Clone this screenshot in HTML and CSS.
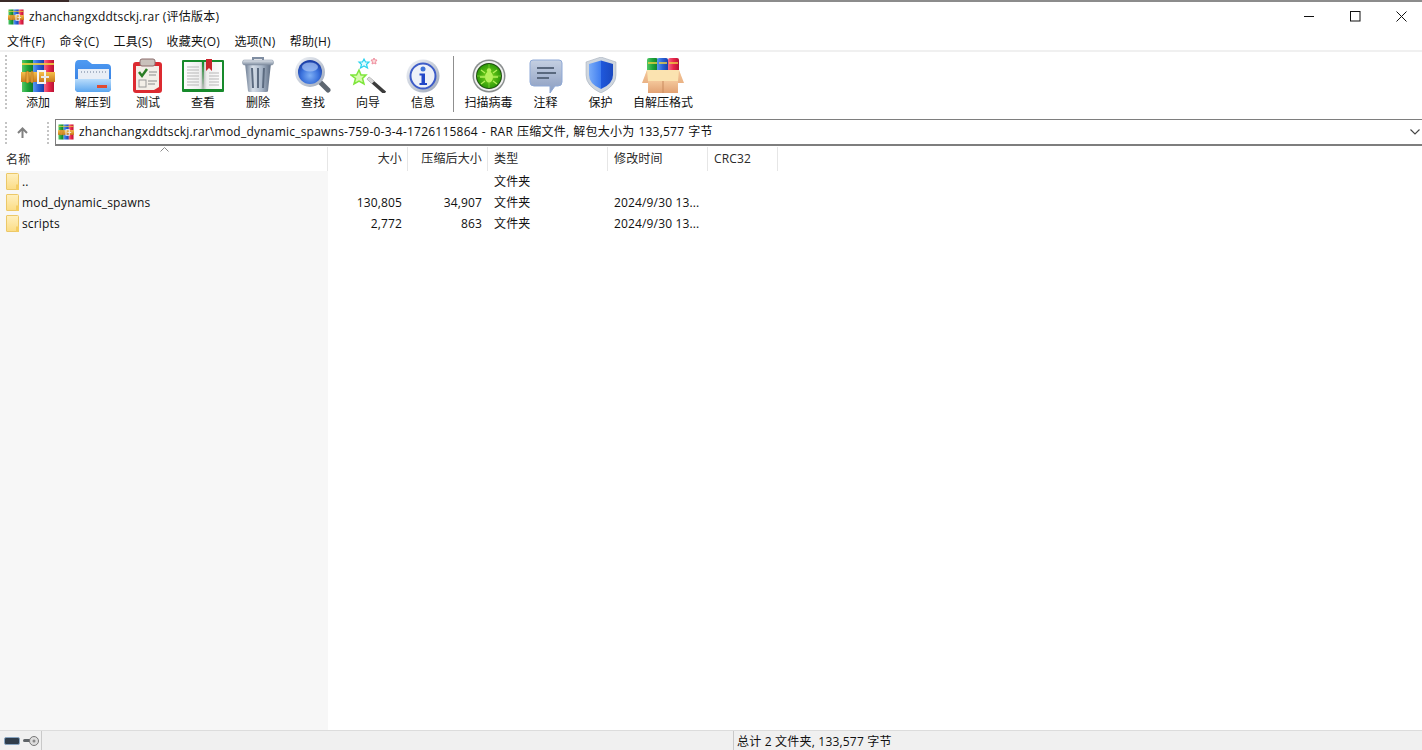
FILE: index.html
```html
<!DOCTYPE html>
<html lang="zh-CN">
<head>
<meta charset="utf-8">
<title>zhanchangxddtsckj.rar (评估版本)</title>
<link rel="stylesheet" href="styles.css">
</head>
<body>
<svg class="defs" width="0" height="0" aria-hidden="true">
  <defs>
    <linearGradient id="gRed" x1="0" x2="1" y1="0" y2="0"><stop offset="0" stop-color="#f26a8c"/><stop offset=".5" stop-color="#e8264a"/><stop offset="1" stop-color="#b81233"/></linearGradient>
    <linearGradient id="gBlue" x1="0" x2="1" y1="0" y2="0"><stop offset="0" stop-color="#5a9bf0"/><stop offset=".5" stop-color="#2a63d8"/><stop offset="1" stop-color="#1a3fa8"/></linearGradient>
    <linearGradient id="gGreen" x1="0" x2="1" y1="0" y2="0"><stop offset="0" stop-color="#52c765"/><stop offset=".5" stop-color="#1fa53c"/><stop offset="1" stop-color="#0f7a2a"/></linearGradient>
    <linearGradient id="gBelt" x1="0" x2="0" y1="0" y2="1"><stop offset="0" stop-color="#f5c04c"/><stop offset="1" stop-color="#c9791b"/></linearGradient>
    <linearGradient id="gFolderBack" x1="0" x2="0" y1="0" y2="1"><stop offset="0" stop-color="#4f9bf2"/><stop offset="1" stop-color="#2c74dc"/></linearGradient>
    <linearGradient id="gFolderFront" x1="0" x2="0" y1="0" y2="1"><stop offset="0" stop-color="#b9dcfb"/><stop offset="1" stop-color="#5ba6ef"/></linearGradient>
    <linearGradient id="gPage" x1="0" x2="1" y1="0" y2="0"><stop offset="0" stop-color="#fdfdfd"/><stop offset=".85" stop-color="#eeeeee"/><stop offset="1" stop-color="#b5b5b5"/></linearGradient>
    <linearGradient id="gPage2" x1="0" x2="1" y1="0" y2="0"><stop offset="0" stop-color="#b5b5b5"/><stop offset=".2" stop-color="#efefef"/><stop offset="1" stop-color="#fdfdfd"/></linearGradient>
    <linearGradient id="gBin" x1="0" x2="1" y1="0" y2="0"><stop offset="0" stop-color="#6c7c92"/><stop offset=".3" stop-color="#d6dee8"/><stop offset=".65" stop-color="#a8b6c8"/><stop offset="1" stop-color="#5d6c82"/></linearGradient>
    <linearGradient id="gLid" x1="0" x2="0" y1="0" y2="1"><stop offset="0" stop-color="#e4e9ef"/><stop offset="1" stop-color="#7f8da0"/></linearGradient>
    <radialGradient id="gLens" cx=".5" cy=".65" r=".6"><stop offset="0" stop-color="#7fb0f5"/><stop offset=".6" stop-color="#3b72dc"/><stop offset="1" stop-color="#1c40a8"/></radialGradient>
    <linearGradient id="gRing" x1="0" x2="1" y1="0" y2="1"><stop offset="0" stop-color="#f4f6fa"/><stop offset="1" stop-color="#9aa5b8"/></linearGradient>
    <radialGradient id="gScan" cx=".5" cy=".5" r=".5"><stop offset="0" stop-color="#7edb1c"/><stop offset="1" stop-color="#2f9a0a"/></radialGradient>
    <linearGradient id="gNote" x1="0" x2="0" y1="0" y2="1"><stop offset="0" stop-color="#c5d0e2"/><stop offset="1" stop-color="#8a9cc0"/></linearGradient>
    <linearGradient id="gShield" x1="0" x2="1" y1="0" y2="0"><stop offset="0" stop-color="#78abf8"/><stop offset=".5" stop-color="#3f7df0"/><stop offset=".5" stop-color="#1f58dc"/><stop offset="1" stop-color="#1a49c0"/></linearGradient>
    <linearGradient id="gBox" x1="0" x2="0" y1="0" y2="1"><stop offset="0" stop-color="#f4c79a"/><stop offset="1" stop-color="#e2a274"/></linearGradient>
    <linearGradient id="gYellow" x1="0" x2="0" y1="0" y2="1"><stop offset="0" stop-color="#fff0bf"/><stop offset="1" stop-color="#fbdc85"/></linearGradient>
    <symbol id="rar" viewBox="0 0 34 34">
      <rect x="1" y="1" width="11" height="32" fill="url(#gGreen)"/>
      <rect x="12" y="1" width="11" height="32" fill="url(#gBlue)"/>
      <rect x="23" y="1" width="10" height="32" fill="url(#gRed)"/>
      <rect x="1" y="4" width="32" height="2" fill="#f0d040" opacity=".85"/>
      <rect x="0" y="13" width="34" height="10" fill="url(#gBelt)"/>
      <rect x="5" y="12" width="3" height="12" rx="1.500" fill="#e9a53a" stroke="#9a5f10" stroke-width=".5"/>
      <rect x="10" y="12" width="2" height="12" rx="1" fill="#e9a53a" stroke="#9a5f10" stroke-width=".5"/>
      <rect x="17" y="12" width="7" height="12" fill="none" stroke="#f4f4f4" stroke-width="2"/>
      <rect x="20" y="17" width="8" height="2" fill="#e9e9e9"/>
    </symbol>
    <symbol id="folder" viewBox="0 0 13 17">
      <path d="M.5 1Q.5.5 1 .5H11.500Q12.500.5 12.500 1.500V16Q12.500 16.500 12 16.500H1Q.5 16.500.5 16Z" fill="url(#gYellow)" stroke="#ecc868"/>
      <rect x="10" y="11.500" width="3" height="5.500" fill="#f4cd63"/>
    </symbol>
  </defs>
</svg>

<div class="topstrip"></div>

<header class="titlebar">
  <div class="title">
    <svg class="title-icon"><use href="#rar"/></svg>
    <span>zhanchangxddtsckj.rar (评估版本)</span>
  </div>
  <div class="winbtns">
    <button class="winbtn" aria-label="最小化"><svg width="11" height="11"><path d="M0 5.500H10" stroke="#111"/></svg></button>
    <button class="winbtn" aria-label="最大化"><svg width="11" height="11"><rect x=".5" y=".5" width="9.500" height="9.500" fill="none" stroke="#111"/></svg></button>
    <button class="winbtn" aria-label="关闭"><svg width="11" height="11"><path d="M.5.5L10.500 10.500M10.500.5L.5 10.500" stroke="#111"/></svg></button>
  </div>
</header>

<nav class="menubar">
  <span>文件(F)</span><span>命令(C)</span><span>工具(S)</span><span>收藏夹(O)</span><span>选项(N)</span><span>帮助(H)</span>
</nav>

<section class="toolbar">
  <div class="grip"></div>
  <div class="tool"><svg class="ti" viewBox="0 -2 34 36"><use href="#rar" width="34" height="34"/></svg><span>添加</span></div>
  <div class="tool"><svg class="ti" viewBox="0 -2 36 36">
    <path d="M0 6Q0 1 4 1H12L17 5H32Q36 5 36 9V29Q36 33 32 33H4Q0 33 0 29Z" fill="url(#gFolderBack)"/>
    <path d="M3 10H34V21H3Z" fill="#e9eef6"/>
    <path d="M6 13H31" stroke="#a9b4c6" stroke-dasharray="1 2" stroke-width="2"/>
    <path d="M0 20H36V29Q36 33 32 33H4Q0 33 0 29Z" fill="url(#gFolderFront)"/>
    <rect x="22" y="26" width="10" height="3" fill="#e04a30"/>
  </svg><span>解压到</span></div>
  <div class="tool"><svg class="ti" viewBox="0 -2 30 36">
    <rect x="0" y="3" width="29" height="31" rx="3" fill="#dc2a30"/>
    <path d="M3 7H26V28L21 31H3Z" fill="#f3efe8"/>
    <rect x="7" y="0" width="15" height="7" rx="2" fill="#c9c1bb" stroke="#8c6d6d"/>
    <path d="M6 13L9 17L14 10" fill="none" stroke="#2a7d24" stroke-width="2.500"/>
    <path d="M16 13H24M16 16H23M15 22H24M15 25H22" stroke="#8b8b8b"/>
    <rect x="6" y="21" width="7" height="7" fill="none" stroke="#9a9a9a"/>
  </svg><span>测试</span></div>
  <div class="tool"><svg class="ti wide" viewBox="-1 -2 44 36">
    <rect x="0" y="1" width="42" height="32" rx="1" fill="#178a2b"/>
    <path d="M2 3H20L21 30H2Z" fill="url(#gPage)"/>
    <path d="M22 3H40V30H21Z" fill="url(#gPage2)"/>
    <path d="M5 8H17M5 11H17M5 14H17M5 17H17M5 20H17M5 23H17M5 26H17M27 14H37M27 17H37M27 20H37M27 23H37M27 26H37" stroke="#b7b7b7"/>
    <path d="M24 0H30V12L27 9L24 12Z" fill="#c9242c"/>
  </svg><span>查看</span></div>
  <div class="tool"><svg class="ti" viewBox="0 0 32 36">
    <path d="M11 3V1H21V3" fill="none" stroke="#808ea2" stroke-width="2"/>
    <path d="M3 6H29L26 34Q26 35 24 35H8Q6 35 6 34Z" fill="url(#gBin)"/>
    <path d="M10 11L11 31M16 11V31M22 11L21 31" stroke="#5c6b80" stroke-width="2"/>
    <rect x="0.500" y="3" width="31" height="5" rx="2" fill="url(#gLid)" stroke="#7d8a9c" stroke-width=".5"/>
  </svg><span>删除</span></div>
  <div class="tool"><svg class="ti" viewBox="0 0 36 36">
    <path d="M24 24L33 33" stroke="#5d6670" stroke-width="5" stroke-linecap="round"/>
    <circle cx="15" cy="15" r="15" fill="url(#gRing)"/>
    <circle cx="15" cy="15" r="12" fill="url(#gLens)"/>
    <ellipse cx="15" cy="10" rx="8" ry="4.500" fill="#a9c5f3" opacity=".7"/>
  </svg><span>查找</span></div>
  <div class="tool"><svg class="ti" viewBox="0 0 36 36">
    <path d="M18 21L35 36" stroke="#3c3c3c" stroke-width="3.500"/>
    <path d="M18 21L23 25.500" stroke="#d8d8d8" stroke-width="3.500"/>
    <path d="M9 13L11 18L16 18L12.500 21.500L14 27L9 24L4 27L5.500 21.500L1 18L6.500 18Z" fill="#d6fbae" stroke="#7fe63c" stroke-width="1.500"/>
    <path d="M14 2L15.500 5H19L16.500 7.500L17.500 11L14 9L10.500 11L11.500 7.500L9 5H12.500Z" fill="#e3fbff" stroke="#2bd3ef" stroke-width="1.200"/>
    <path d="M24 1L25 3H27L25.500 5L26 7L24 6L22 7L22.500 5L21 3H23Z" fill="#fbdada" stroke="#ef8f9f"/>
  </svg><span>向导</span></div>
  <div class="tool"><svg class="ti" viewBox="0 -2 34 36">
    <circle cx="17" cy="17" r="16.500" fill="url(#gRing)"/>
    <circle cx="17" cy="17" r="12.500" fill="#eef1f8" stroke="#3d5cc8" stroke-width="2"/>
    <circle cx="17" cy="10" r="2.500" fill="#3d72d8"/>
    <path d="M13.500 14.500H19V24H21V26H13.500V24H15.500V16.500H13.500Z" fill="#2247c8"/>
  </svg><span>信息</span></div>
  <div class="sep"></div>
  <div class="tool tool-scan"><svg class="ti" viewBox="0 -2 34 36">
    <circle cx="17" cy="17" r="16.500" fill="#8b8f8f"/>
    <circle cx="17" cy="17" r="15" fill="#f0f0f0"/>
    <circle cx="17" cy="17" r="13" fill="#1f4a10"/>
    <circle cx="17" cy="17" r="12" fill="url(#gScan)"/>
    <path d="M17 5V29M5 17H29" stroke="#a8ea50" opacity=".5"/>
    <ellipse cx="17" cy="18" rx="4" ry="5.500" fill="#b4f05a"/>
    <circle cx="17" cy="11.500" r="2.200" fill="#b4f05a"/>
    <path d="M13 14L9 11M21 14L25 11M13 18H8M21 18H26M13 22L9 25M21 22L25 25" stroke="#b4f05a" stroke-width="1.300"/>
  </svg><span>扫描病毒</span></div>
  <div class="tool"><svg class="ti" viewBox="0 -2 34 36">
    <path d="M4 1H30Q33 1 33 4V23Q33 27 29 27H26L21 34V27H5Q1 27 1 23V4Q1 1 4 1Z" fill="url(#gNote)" stroke="#8fa9d6"/>
    <path d="M8 9H25M8 14H27M8 19H20" stroke="#59687e" stroke-width="2"/>
  </svg><span>注释</span></div>
  <div class="tool"><svg class="ti" viewBox="0 0 30 36">
    <path d="M15 0L30 5V18Q30 29 15 36Q0 29 0 18V5Z" fill="#cfd6de" stroke="#9aa6b4" stroke-width=".5"/>
    <path d="M15 3.500L27 7V18Q27 27 15 32Q3 27 3 18V7Z" fill="url(#gShield)"/>
  </svg><span>保护</span></div>
  <div class="tool tool-wide"><svg class="ti box" viewBox="0 0 42 36">
    <rect x="5" y="1" width="11" height="20" rx="2" fill="url(#gGreen)"/>
    <rect x="15" y="1" width="11" height="20" rx="2" fill="url(#gBlue)"/>
    <rect x="26" y="1" width="11" height="20" rx="2" fill="url(#gRed)"/>
    <path d="M6 6H15M17 6H25M27 6H36" stroke="#f0d040" stroke-width="1.500"/>
    <path d="M5 13H37L41 26H1Z" fill="#fbe3b0"/>
    <path d="M5 13L0 26H6V36H36V26H42L37 13L36 24H6Z" fill="url(#gBox)"/>
    <path d="M6 24H36V36H6Z" fill="url(#gBox)"/>
    <path d="M21 24V36" stroke="#c98a5c"/>
  </svg><span>自解压格式</span></div>
</section>

<section class="addressrow">
  <div class="grip grip-small"></div>
  <div class="up"><svg width="11" height="11" viewBox="0 0 11 11"><path d="M5.500 11V1.500M1 6L5.500 1.500L10 6" fill="none" stroke="#808080" stroke-width="2"/></svg></div>
  <div class="grip grip-small"></div>
  <div class="addressbox">
    <svg class="title-icon"><use href="#rar"/></svg>
    <span class="path">zhanchangxddtsckj.rar\mod_dynamic_spawns-759-0-3-4-1726115864 - RAR 压缩文件, 解包大小为 133,577 字节</span>
    <svg class="chev" width="10" height="6" viewBox="0 0 10 6"><path d="M.5.5L5 5L9.500.5" fill="none" stroke="#444" stroke-width="1.100"/></svg>
  </div>
</section>

<main class="list">
  <div class="row head">
    <div class="c c-name hc">名称<svg class="caret" width="9" height="5" viewBox="0 0 9 5"><path d="M.5 4.500L4.500.5L8.500 4.500" fill="none" stroke="#8a8a8a"/></svg></div>
    <div class="c c-num hc">大小</div>
    <div class="c c-num hc">压缩后大小</div>
    <div class="c c-type hc">类型</div>
    <div class="c c-time hc">修改时间</div>
    <div class="c c-crc hc">CRC32</div>
  </div>
  <div class="row item">
    <div class="c c-name"><svg class="fi"><use href="#folder"/></svg>..</div>
    <div class="c c-num"></div><div class="c c-num"></div>
    <div class="c c-type">文件夹</div><div class="c c-time"></div><div class="c c-crc"></div>
  </div>
  <div class="row item">
    <div class="c c-name"><svg class="fi"><use href="#folder"/></svg>mod_dynamic_spawns</div>
    <div class="c c-num">130,805</div><div class="c c-num">34,907</div>
    <div class="c c-type">文件夹</div><div class="c c-time">2024/9/30 13...</div><div class="c c-crc"></div>
  </div>
  <div class="row item">
    <div class="c c-name"><svg class="fi"><use href="#folder"/></svg>scripts</div>
    <div class="c c-num">2,772</div><div class="c c-num">863</div>
    <div class="c c-type">文件夹</div><div class="c c-time">2024/9/30 13...</div><div class="c c-crc"></div>
  </div>
</main>

<footer class="statusbar">
  <div class="st-icons">
    <svg width="16" height="8" viewBox="0 0 16 8"><rect x=".5" y=".5" width="15" height="7" rx="1.500" fill="#2f3c4a" stroke="#88a4c0"/></svg>
    <svg width="16" height="10" viewBox="0 0 16 10"><rect x="0" y="3" width="10" height="3" rx="1.500" fill="#5f6468"/><circle cx="11" cy="5" r="4.500" fill="#ddd" stroke="#777"/><circle cx="11" cy="5" r="1.500" fill="#888"/></svg>
  </div>
  <div class="st-mid"></div>
  <div class="st-text">总计 2 文件夹, 133,577 字节</div>
</footer>
</body>
</html>
```
FILE: styles.css
```css
* { box-sizing: border-box; }
html, body { margin: 0; padding: 0; height: 100%; }
body {
  width: 1422px;
  height: 750px;
  overflow: hidden;
  display: flex;
  flex-direction: column;
  background: #fff;
  color: #111;
  font: 12px/16px "Open Sans", "Noto Sans CJK SC", sans-serif;
  letter-spacing: .2px;
}
.defs { position: absolute; }

.topstrip {
  height: 2px;
  flex: none;
  background: linear-gradient(to right, #3a2a28 69px, #8c8c8c 69px);
}

.titlebar {
  height: 30px;
  display: flex;
  justify-content: space-between;
  align-items: center;
  flex: none;
}
.title { display: flex; align-items: center; gap: 5px; padding-left: 8px; }
.title-icon { width: 16px; height: 16px; flex: none; }
.winbtns { display: flex; margin-right: -2px; }
.winbtn {
  width: 46px;
  height: 30px;
  border: 0;
  padding: 0 0 2px;
  background: none;
  display: flex;
  align-items: center;
  justify-content: center;
}

.menubar {
  height: 18px;
  flex: none;
  display: flex;
  align-items: center;
  gap: 14.300px;
  padding: 2px 0 0 7px;
}

.toolbar {
  height: 67px;
  flex: none;
  display: flex;
  align-items: flex-start;
  border-top: 2px solid #f0f0f0;
  padding-top: 5px;
  padding-left: 5px;
}
.grip {
  width: 2px;
  height: 56px;
  flex: none;
  margin: -2px 3.500px 0 0;
  background: repeating-linear-gradient(to bottom, #c4c4c4 0 2px, transparent 2px 4px);
}
.tool {
  width: 55px;
  flex: none;
  display: flex;
  flex-direction: column;
  align-items: center;
  font-size: 12px;
  letter-spacing: 0;
}
.tool span { margin-top: 2px; white-space: nowrap; }
.ti { height: 36px; width: 36px; }
.ti.wide { width: 44px; }
.ti.box { width: 44px; }
.tool-scan { margin-right: 2px; }
.tool-wide { width: 70px; margin-left: 0; }
.sep {
  width: 1px;
  height: 56px;
  flex: none;
  margin: -1px 7px 0 2.500px;
  background: #8f8f8f;
}

.addressrow {
  height: 29px;
  flex: none;
  display: flex;
  align-items: stretch;
  padding: 2px 0 0 5px;
}
.addressrow .grip-small { height: 23px; margin: 3px 0 0; }
.up {
  width: 40px;
  padding-right: 10px;
  display: flex;
  align-items: center;
  justify-content: center;
}
.addressbox {
  flex: 1;
  margin-left: 6px;
  display: flex;
  align-items: center;
  gap: 5px;
  padding-left: 2px;
  border: 1px solid #7e7e7e;
  border-right: 0;
  border-bottom-width: 2px;
}
.path { flex: 1; white-space: nowrap; letter-spacing: .22px; word-spacing: .7px; }
.chev { margin-right: 2px; }

.list {
  flex: 1;
  margin-top: 1px;
  letter-spacing: .15px;
  background: linear-gradient(to right, #f7f7f7 328px, #fff 328px);
}
.row {
  display: grid;
  grid-template-columns: 328px 80px 80px 120px 100px 70px;
}
.head { height: 24px; background: #fff; }
.item { height: 21px; align-items: center; }
.c { padding: 0 6px; white-space: nowrap; }
.c-num { text-align: right; }
.c-name { display: flex; align-items: center; }
.hc {
  line-height: 23px;
  border-right: 1px solid #e6e6e6;
  color: #2a2a2a;
  position: relative;
}
.hc.c-num { display: block; padding-right: 5px; }
.caret { position: absolute; left: 160px; top: 0; }
.fi { width: 13px; height: 17px; margin-right: 3px; flex: none; }

.statusbar {
  height: 20px;
  flex: none;
  display: flex;
  align-items: stretch;
  background: #f0f0f0;
  border-top: 1px solid #dcdcdc;
}
.st-icons {
  width: 42px;
  display: flex;
  align-items: center;
  gap: 3px;
  padding-left: 4px;
  border-right: 1px solid #c9c9c9;
}
.st-mid { width: 692px; border-right: 1px solid #c9c9c9; }
.st-text { padding-left: 3px; line-height: 21px; }
```
